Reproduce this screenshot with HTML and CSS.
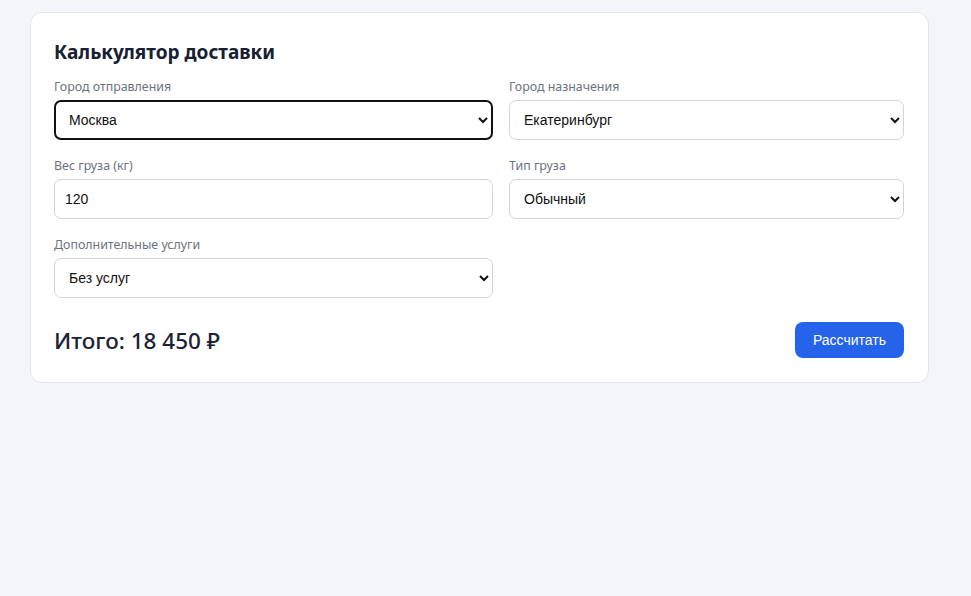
FILE: index.html
```html
<!DOCTYPE html>
<html lang="ru">
<head>
<meta charset="utf-8">
<title>Калькулятор доставки</title>
<link rel="stylesheet" href="styles.css">
</head>
<body>
<section class="calc">
  <h2 class="calc-title">Калькулятор доставки</h2>
  <div class="calc-grid">
    <label class="field">
      <span class="field-label">Город отправления</span>
      <select class="control is-focused">
        <option>Москва</option>
        <option>Санкт-Петербург</option>
      </select>
    </label>
    <label class="field">
      <span class="field-label">Город назначения</span>
      <select class="control">
        <option>Екатеринбург</option>
        <option>Новосибирск</option>
      </select>
    </label>
    <label class="field">
      <span class="field-label">Вес груза (кг)</span>
      <input class="control control-input" type="text" value="120">
    </label>
    <label class="field">
      <span class="field-label">Тип груза</span>
      <select class="control">
        <option>Обычный</option>
        <option>Хрупкий</option>
      </select>
    </label>
    <label class="field">
      <span class="field-label">Дополнительные услуги</span>
      <select class="control">
        <option>Без услуг</option>
        <option>Страховка</option>
      </select>
    </label>
  </div>
  <div class="calc-footer">
    <div class="calc-total">Итого: 18 450 ₽</div>
    <button class="calc-btn" type="button">Рассчитать</button>
  </div>
</section>
</body>
</html>
```
FILE: styles.css
```css
* { box-sizing: border-box; }

body {
  margin: 0;
  padding: 12px 30px;
  background: #f4f5f9;
  font-family: "Noto Sans", "Open Sans", sans-serif;
  color: #1f2937;
}

.calc {
  max-width: 899px;
  background: #fff;
  border: 1px solid #e3e5ea;
  border-radius: 12px;
  padding: 26px 24px 24px 23px;
}

.calc-title {
  margin: 0 0 15px;
  font-size: 19px;
  line-height: 26px;
  font-weight: 700;
  color: #162033;
}

.calc-grid {
  display: grid;
  grid-template-columns: 439px 1fr;
  column-gap: 16px;
  row-gap: 19px;
}

.field {
  display: flex;
  flex-direction: column;
  gap: 6px;
}

.field-label {
  font-size: 12.4px;
  line-height: 14px;
  color: #6b7280;
}

.control {
  height: 40px;
  width: 100%;
  border: 1px solid #d1d5db;
  border-radius: 7px;
  background: #fff;
  font-family: "Liberation Sans", Arial, sans-serif;
  font-size: 14px;
  color: #111;
  padding: 0 10px;
  outline: none;
}

.control.is-focused {
  border: 2px solid #111;
  padding: 0 9px;
}

.calc-footer {
  display: flex;
  justify-content: space-between;
  align-items: center;
  margin-top: 24px;
}

.calc-total {
  font-size: 22.5px;
  font-weight: 500;
  color: #1b2233;
}

.calc-btn {
  height: 36px;
  padding: 0 18px;
  border: none;
  border-radius: 8px;
  background: #2563eb;
  color: #fff;
  font-family: "Liberation Sans", Arial, sans-serif;
  font-size: 14px;
}
```
